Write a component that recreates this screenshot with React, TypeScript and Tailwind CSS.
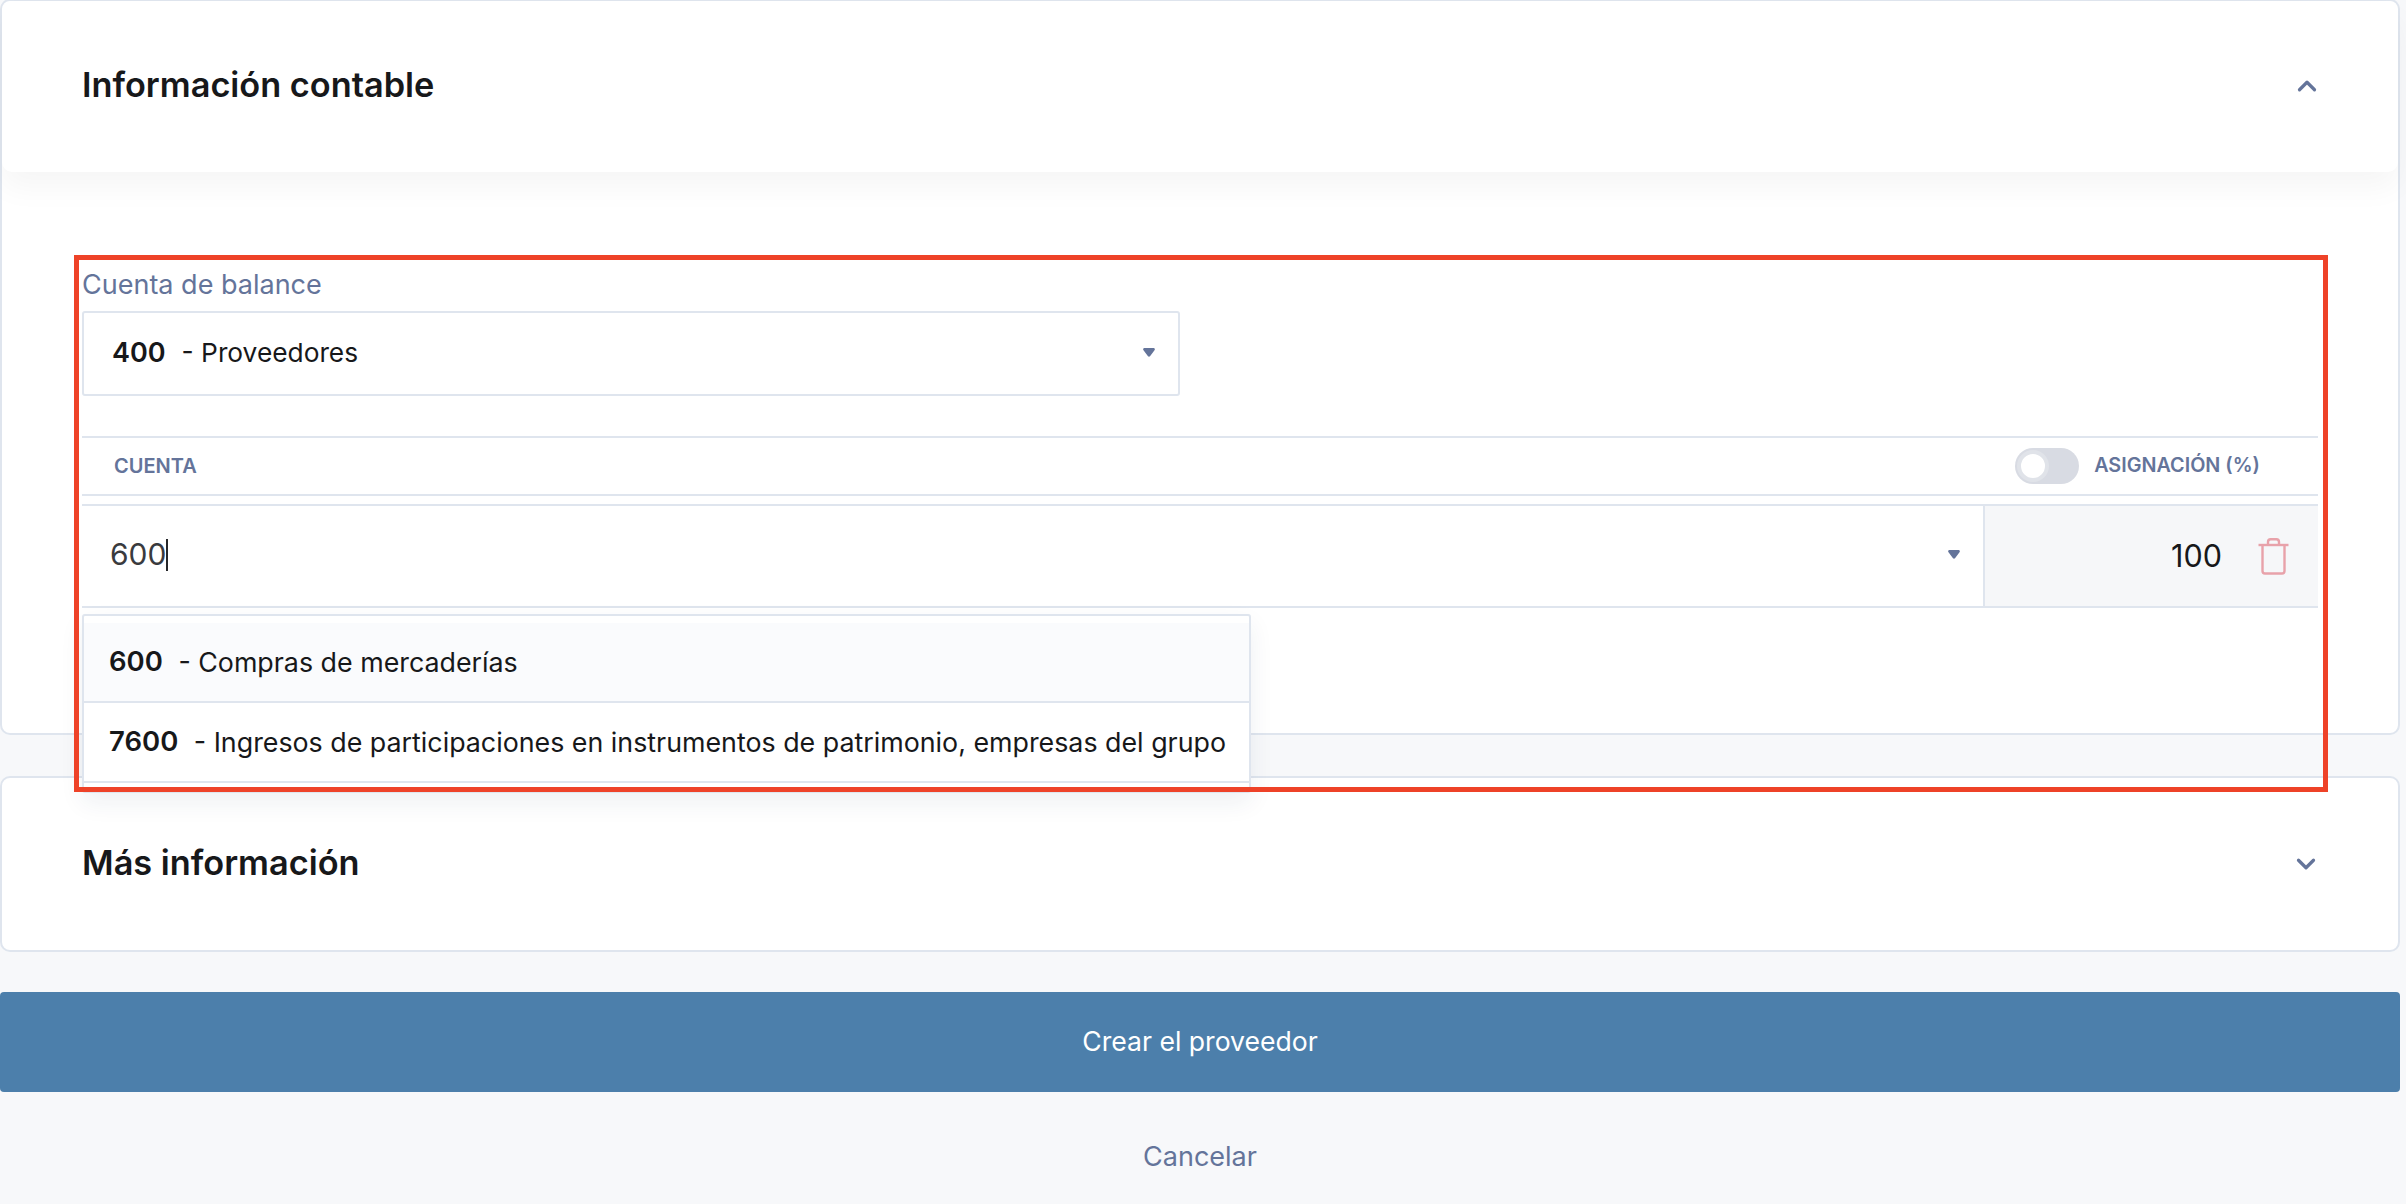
import { ChevronDown, ChevronUp } from 'lucide-react'

function Caret() {
    return (
        <svg width="12" height="9" viewBox="0 0 12 9" className="shrink-0">
            <path d="M1.5 0h9c1.200 0 1.800 1.300 1 2.200L7 8.300c-.5.600-1.500.600-2 0L.5 2.200C-.3 1.300.3 0 1.500 0z" fill="#64749a" />
        </svg>
    )
}

function TrashIcon() {
    return (
        <svg width="31" height="37" viewBox="0 0 31 37" fill="none" stroke="#e8a2aa" strokeWidth="2.4" strokeLinejoin="round">
            <path d="M0.5 7h30" />
            <path d="M10 7V4c0-1.600 1-2.700 2.600-2.700h5.800C20 1.300 21 2.400 21 4v3" />
            <path d="M4.500 7v26c0 1.500 1 2.500 2.500 2.500h17c1.500 0 2.500-1 2.500-2.500V7" />
        </svg>
    )
}

function AccountOption({ code, name, active }: { code: string; name: string; active?: boolean }) {
    return (
        <div className={`h-[80px] flex items-center pl-[25px] text-[26.8px] text-[#17181a] border-b-2 border-[#dfe5ee] ${active ? 'bg-[#fafbfd]' : 'bg-white'}`}>
            <span className="font-semibold text-[27.5px]">{code}</span>
            <span className="ml-[15.5px]">- {name}</span>
        </div>
    )
}

export default function App() {
    return (
        <div className="w-[2406px] h-[1204px] overflow-hidden bg-[#f7f8fa] font-['Inter',sans-serif]">

            {/* Información contable */}
            <div className="relative w-[2400px] h-[736px] -mt-[1px] bg-white border-2 border-[#dfe5ee] rounded-[10px]">
                <div className="relative z-10 h-[171px] pl-[80px] pr-[79px] pb-[3px] flex items-center justify-between bg-white rounded-[10px] shadow-[0_16px_30px_rgba(0,0,0,0.04)]">
                    <h2 className="text-[34.3px] font-semibold text-[#17181a]">Información contable</h2>
                    <div className="pt-[2px]">
                        <ChevronUp size={30} strokeWidth={2.6} color="#64749a" className="-mr-[3px]" />
                    </div>
                </div>

                <div className="px-[80px] pt-[95px]">
                    <div className="text-[27px] leading-[35px] text-[#64749a]">Cuenta de balance</div>

                    <div className="mt-[9px] w-[1098px] h-[85px] flex items-center justify-between pl-[28px] pr-[23px] border-2 border-[#dfe5ee] rounded-[3px] text-[26.3px] text-[#17181a]">
                        <div>
                            <span className="font-semibold text-[27px]">400</span>
                            <span className="ml-[16px]">- Proveedores</span>
                        </div>
                        <div className="-mt-[2px]">
                            <Caret />
                        </div>
                    </div>

                    <div className="mt-[40px] h-[60px] flex items-center justify-between pl-[32px] pr-[58px] border-y-2 border-[#dfe5ee]">
                        <span className="text-[20px] font-semibold text-[#64749a]">CUENTA</span>
                        <div className="flex items-center gap-[15px]">
                            <div className="w-[64px] h-[36px] flex items-center rounded-full bg-[#d8dbe3] pl-[2px]">
                                <div className="w-[32px] h-[32px] rounded-full bg-white border-[4px] border-[#e0e3e9]" />
                            </div>
                            <span className="text-[19.8px] font-semibold text-[#64749a]">ASIGNACIÓN (%)</span>
                        </div>
                    </div>

                    <div className="relative mt-[8px] h-[104px] flex border-y-2 border-[#dfe5ee]">
                        <div className="w-[1903px] flex items-center justify-between pl-[28px] pr-[23px] pb-[3px] border-r-2 border-[#dfe5ee]">
                            <div className="flex items-center text-[30px] text-[#3a3b3e]">
                                600
                                <span className="w-[2px] h-[32px] bg-[#26272a]" />
                            </div>
                            <Caret />
                        </div>
                        <div className="flex-1 flex items-center justify-end gap-[36px] pr-[29px] bg-[#f6f7f9]">
                            <span className="text-[30.5px] text-[#17181a]">100</span>
                            <TrashIcon />
                        </div>

                        {/* Desplegable de cuentas */}
                        <div className="absolute z-20 left-0 top-[108px] w-[1169px] h-[179px] pt-[7px] bg-white border-2 border-[#dfe5ee] rounded-[3px] shadow-[0_10px_24px_rgba(30,50,90,0.07)]">
                            <AccountOption code="600" name="Compras de mercaderías" active />
                            <AccountOption code="7600" name="Ingresos de participaciones en instrumentos de patrimonio, empresas del grupo" />
                        </div>
                    </div>
                </div>

                {/* Marca de la captura */}
                <div className="absolute z-30 left-[72px] top-[254px] w-[2254px] h-[537px] border-[5px] border-[#ee4228] pointer-events-none" />
            </div>

            {/* Más información */}
            <div className="mt-[41px] w-[2400px] h-[176px] pl-[80px] pr-[79px] pb-[3px] flex items-center justify-between bg-white border-2 border-[#dfe5ee] rounded-[10px]">
                <h2 className="text-[34.3px] font-semibold text-[#17181a]">Más información</h2>
                <div className="pt-[3px]">
                    <ChevronDown size={30} strokeWidth={2.6} color="#64749a" className="-mr-[2px]" />
                </div>
            </div>

            <button className="mt-[40px] block w-[2400px] h-[100px] rounded-[4px] bg-[#4c7fab] text-[26.6px] text-white">
                Crear el proveedor
            </button>

            <div className="mt-[46px] w-[2400px] text-center text-[27px] leading-[38px] text-[#64749a]">Cancelar</div>
        </div>
    )
}
